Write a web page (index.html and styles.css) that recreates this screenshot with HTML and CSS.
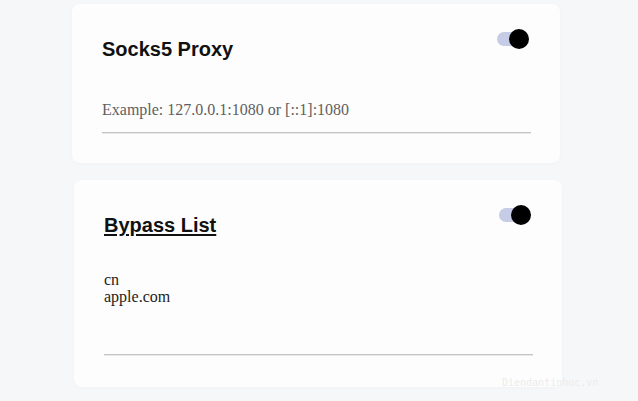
FILE: index.html
```html
<!DOCTYPE html>
<html lang="en">
<head>
    <meta charset="UTF-8">
    <meta name="viewport" content="width=device-width, initial-scale=1.0">
    <title>Proxy Settings</title>
    <link rel="stylesheet" href="styles.css">
</head>
<body>
    <div class="settings">

        <section class="card">
            <div class="card-header">
                <h2>Socks5 Proxy</h2>
                <label class="switch">
                    <input type="checkbox" checked>
                    <span class="track"></span>
                    <span class="knob"></span>
                </label>
            </div>
            <input class="field proxy-field" type="text" placeholder="Example: 127.0.0.1:1080 or [::1]:1080">
        </section>

        <section class="card bypass-card">
            <div class="card-header">
                <h2 class="linked">Bypass List</h2>
                <label class="switch">
                    <input type="checkbox" checked>
                    <span class="track"></span>
                    <span class="knob"></span>
                </label>
            </div>
            <textarea class="field bypass-field" rows="4">cn
apple.com</textarea>
        </section>

    </div>

    <div class="watermark">Diendantinhoc.vn</div>
</body>
</html>
```

FILE: styles.css
```css
:root {
    --page-bg: #f6f7f9;
    --card-bg: #fdfdfd;
    --track-color: #c6cbe6;
    --line-color: #c4c4c4;
}

* {
    margin: 0;
    padding: 0;
    box-sizing: border-box;
}

body {
    background-color: var(--page-bg);
    font-family: 'Liberation Sans', Arial, sans-serif;
    min-height: 100vh;
}

.settings {
    width: 490px;
    margin-left: 72px;
    padding-top: 4px;
    display: flex;
    flex-direction: column;
    align-items: flex-start;
    gap: 17px;
}

.card {
    width: 488px;
    background-color: var(--card-bg);
    border-radius: 8px;
    box-shadow: 0 1px 4px rgba(0, 0, 0, 0.025);
    padding: 25px 29px 0 30px;
    height: 159px;
}

.bypass-card {
    margin-left: 2px;
    height: 207px;
}

.card-header {
    display: flex;
    justify-content: space-between;
    align-items: flex-start;
}

h2 {
    margin-top: 9px;
    font-size: 20px;
    font-weight: bold;
    color: #111;
    line-height: 23px;
}

.linked {
    text-decoration: underline;
    text-decoration-thickness: 2px;
    text-underline-offset: 2px;
}

/* toggle switch */
.switch {
    position: relative;
    width: 32px;
    height: 20px;
    margin-right: 2px;
}

.switch input {
    display: none;
}

.track {
    position: absolute;
    left: 0;
    top: 3px;
    width: 30px;
    height: 14px;
    border-radius: 7px;
    background-color: var(--track-color);
}

.knob {
    position: absolute;
    right: 0;
    top: 0;
    width: 20px;
    height: 20px;
    border-radius: 50%;
    background-color: #000;
}

.field {
    display: block;
    width: 100%;
    border: none;
    border-bottom: 1px solid var(--line-color);
    box-shadow: 0 1px 0 #e8e8e8;
    background: transparent;
    outline: none;
    font-family: 'Liberation Serif', 'Times New Roman', serif;
    font-size: 16px;
    color: #222;
}

.field::placeholder {
    color: #5f5f5f;
}

.proxy-field {
    margin-top: 33px;
    padding: 6px 0 13px;
    line-height: 19px;
}

.bypass-field {
    margin-top: 34px;
    padding: 0 0 15px;
    line-height: 17px;
    resize: none;
    overflow: hidden;
}

.watermark {
    position: absolute;
    left: 502px;
    top: 377px;
    font-family: 'DejaVu Sans Mono', monospace;
    font-size: 10px;
    color: #ececec;
}
```
